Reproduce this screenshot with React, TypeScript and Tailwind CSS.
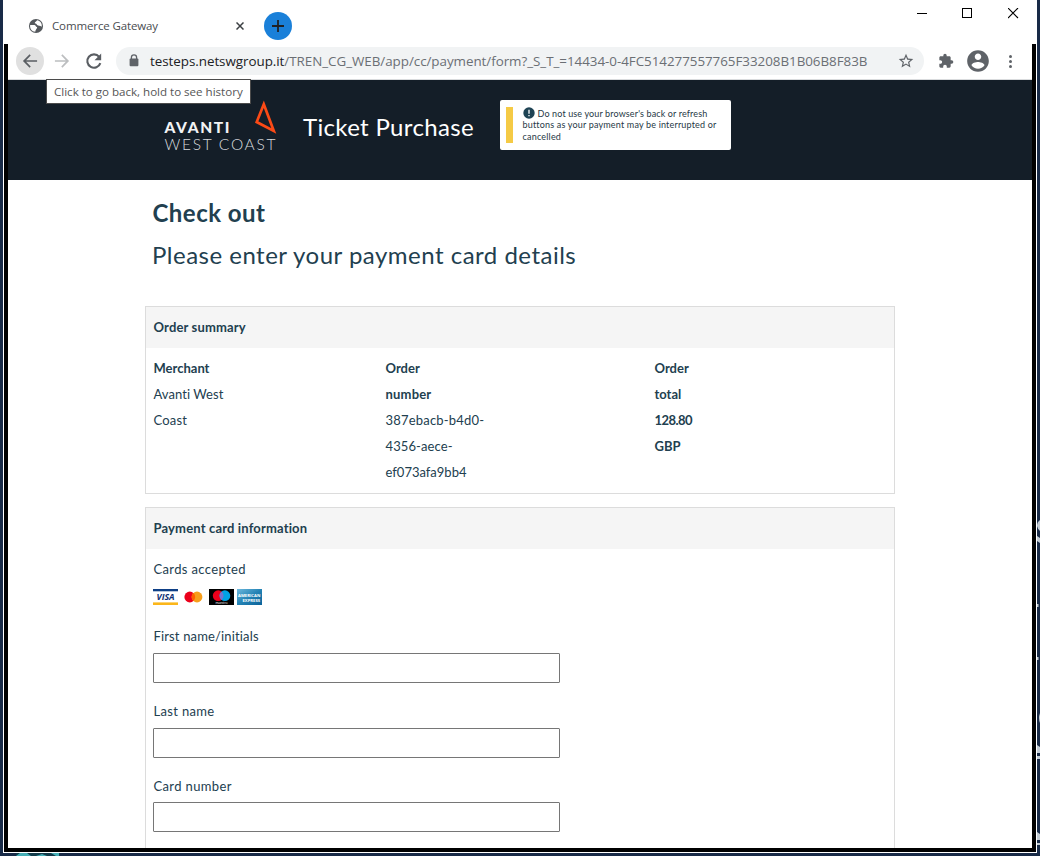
import type { ReactNode } from "react";

function Globe() {
  return (
    <svg width="16" height="16" viewBox="0 0 24 24" className="shrink-0">
      <circle cx="12" cy="12" r="10.6" fill="#55595d" />
      <path d="M3.200 10.600 H9.500 C11.600 10.600 11.600 13.400 13.400 13.600 C14.600 15.600 11.600 16.400 10.900 20.800 C5.800 20.400 2.500 16 3.200 10.600Z" fill="#fff" />
      <path d="M13.600 3.400 C13.200 5.600 9.800 5.400 10.200 8 C11.800 8.600 13 8.600 13.600 10.600 C15.600 12.400 18 11 20.600 13 C21.400 8 18 4 13.600 3.400Z" fill="#fff" />
    </svg>
  );
}

function TitleBar() {
  return (
    <div className="flex h-[44px] shrink-0 items-start">
      <div className="ml-[25px] mt-[18px] flex h-4 items-center">
        <Globe />
        <span className="ml-2 w-[184px] text-[11.5px] leading-4 tracking-[-0.12px] text-[#4a4d51]">Commerce Gateway</span>
        <svg width="8" height="8" viewBox="0 0 8 8">
          <path d="M.5 .5 7.5 7.5M7.5 .5 .5 7.5" stroke="#3c4043" strokeWidth="1.5" />
        </svg>
      </div>
      <div className="ml-[20px] mt-[12px] flex size-[28px] items-center justify-center rounded-full bg-[#1a80d9]">
        <svg width="12" height="12" viewBox="0 0 12 12">
          <path d="M6 0V12M0 6H12" stroke="#202124" strokeWidth="1.8" />
        </svg>
      </div>
      <div className="ml-auto mr-[18px] mt-[8px] flex items-center gap-[35px]">
        <svg width="11" height="11" viewBox="0 0 11 11" shapeRendering="crispEdges">
          <path d="M0 5.5H10" stroke="#000" />
        </svg>
        <svg width="11" height="11" viewBox="0 0 11 11" className="-ml-[1px]" shapeRendering="crispEdges">
          <rect x=".5" y=".5" width="9" height="9" fill="none" stroke="#000" />
        </svg>
        <svg width="11" height="11" viewBox="0 0 11 11">
          <path d="M0 0 10 10M10 0 0 10" stroke="#000" strokeWidth="1.1" />
        </svg>
      </div>
    </div>
  );
}

function Toolbar() {
  return (
    <div className="relative flex h-[36px] items-start border-b border-[#d9dbdd] pl-2 pt-[3px]">
      <div className="flex gap-1 text-[#5a5e63]">
        <div className="flex size-[28px] items-center justify-center rounded-full bg-[#e0e0e0]">
          <svg width="20" height="20" viewBox="0 0 24 24" fill="currentColor">
            <path d="M20.500 11H7.400l5.500-5.500L11.500 4l-8 8 8 8 1.400-1.500L7.400 13H20.500v-2z" />
          </svg>
        </div>
        <div className="flex size-[28px] items-center justify-center text-[#bcbec0]">
          <svg width="20" height="20" viewBox="0 0 24 24" fill="currentColor">
            <path d="M12.500 4 11.100 5.500 16.600 11H3.500v2h13.100l-5.500 5.500L12.500 20l8-8z" />
          </svg>
        </div>
        <div className="flex size-[28px] items-center justify-center">
          <svg width="20" height="20" viewBox="0 0 24 24" fill="none" stroke="currentColor" strokeWidth="2.500">
            <path d="M18.200 7A8 8 0 1 0 19.600 14.500" />
            <path d="M20.600 3V11H12.600L15.600 8L17.700 5.900Z" fill="currentColor" stroke="none" />
          </svg>
        </div>
      </div>
      <div className="ml-2 flex h-[28px] w-[808px] items-center rounded-full bg-[#f1f3f4] pl-[13px] pr-[10px]">
        <svg width="10" height="13" viewBox="0 0 10 13" className="-mt-[2px]">
          <path d="M2.4 5.5V3.4a2.6 2.6 0 0 1 5.2 0V5.5" fill="none" stroke="#5f6368" strokeWidth="1.3" />
          <rect x="0.6" y="4.6" width="8.8" height="7.6" rx="1" fill="#5f6368" />
        </svg>
        <span className="ml-[11px] whitespace-nowrap text-[13.4px] tracking-[-0.04px] text-[#202124]">
          testeps.netswgroup.it
          <span className="text-[#6b6f74]">/TREN_CG_WEB/app/cc/payment/form?_S_T_=14434-0-4FC514277557765F33208B1B06B8F83B</span>
        </span>
        <svg width="16" height="16" viewBox="1 1 22 22" className="ml-auto shrink-0" fill="#5f6368">
          <path d="m22 9.24-7.19-.62L12 2 9.19 8.63 2 9.24l5.46 4.73L5.82 21 12 17.27 18.18 21l-1.63-7.03zM12 15.4l-3.76 2.27 1-4.28-3.32-2.88 4.38-.38L12 6.1l1.71 4.04 4.38.38-3.32 2.88 1 4.28z" />
        </svg>
      </div>
      <div className="ml-2 flex size-[28px] items-center justify-center">
        <svg width="16" height="16" viewBox="0 0 24 24" fill="#5f6368">
          <path d="M20.5 11H19V7c0-1.1-.9-2-2-2h-4V3.500a2.500 2.500 0 0 0-5 0V5H4c-1.100 0-1.990.9-1.990 2v3.800H3.500c1.490 0 2.700 1.210 2.700 2.700s-1.210 2.700-2.700 2.700H2V20c0 1.100.9 2 2 2h3.800v-1.500c0-1.490 1.210-2.700 2.700-2.700s2.700 1.210 2.700 2.700V22H17c1.100 0 2-.9 2-2v-4h1.500a2.500 2.500 0 0 0 0-5z" />
        </svg>
      </div>
      <div className="ml-1 flex size-[28px] items-center justify-center">
        <svg width="26" height="26" viewBox="0 0 24 24" fill="#5f6368">
          <path d="M12 2C6.48 2 2 6.480 2 12s4.480 10 10 10 10-4.480 10-10S17.520 2 12 2zm0 3c1.660 0 3 1.340 3 3s-1.340 3-3 3-3-1.340-3-3 1.340-3 3-3zm0 14.200c-2.500 0-4.710-1.280-6-3.220.03-1.990 4-3.080 6-3.080 1.990 0 5.970 1.090 6 3.080-1.290 1.940-3.500 3.220-6 3.220z" />
        </svg>
      </div>
      <div className="ml-1 flex size-[28px] flex-col items-center justify-center gap-[2px]">
        <i className="size-[3px] rounded-full bg-[#5f6368]" />
        <i className="size-[3px] rounded-full bg-[#5f6368]" />
        <i className="size-[3px] rounded-full bg-[#5f6368]" />
      </div>
      <div className="absolute left-[38px] top-[35px] z-10 flex h-[25px] w-[205px] items-center whitespace-nowrap border border-[#4b4b4b] bg-white pl-[7px] text-[11.6px] tracking-[-0.02px] text-[#565656]">
        Click to go back, hold to see history
      </div>
    </div>
  );
}

function SiteHeader() {
  return (
    <div className="flex h-[100px] items-start bg-[#141e28] pl-[156px] pt-5 font-[Lato,sans-serif]">
      <svg width="114" height="54" viewBox="0 0 114 54">
        <path d="M99.800 4.200 L92.700 22 L109.800 31 Z" fill="none" stroke="#fb4a16" strokeWidth="2.7" strokeLinejoin="miter" />
        <text x="0.500" y="33.300" fontSize="15.500" fontWeight="900" fill="#f2f3f4" textLength="65" style={{ fontFamily: "Lato, sans-serif" }}>AVANTI</text>
        <text x="0.500" y="50" fontSize="15.500" fontWeight="300" fill="#d8dbde" textLength="111" style={{ fontFamily: "Lato, sans-serif" }}>WEST COAST</text>
      </svg>
      <div className="ml-[25px] mt-[12px] w-[197px] whitespace-nowrap text-[24px] leading-[30px] tracking-[0.330px] text-white">Ticket Purchase</div>
      <div className="flex h-[50px] w-[231px] rounded-[2px] bg-white pl-[6px] pt-[7px]">
        <div className="h-[36px] w-[7px] bg-[#f5ca45]" />
        <div className="ml-[9.500px] mt-[1px] whitespace-nowrap text-[9px] leading-[11.400px] text-[#263845]">
          <div className="flex items-center tracking-[0.130px]">
            <svg width="12" height="12" viewBox="0 0 12 12" className="relative -top-px -my-1 mr-[3px]">
              <circle cx="6" cy="6" r="5.700" fill="#1e4354" />
              <path d="M6 2.800V6.800M6 8V9.300" stroke="#fff" strokeWidth="1.300" />
            </svg>
            Do not use your browser's back or refresh
          </div>
          <div className="tracking-[0.180px]">buttons as your payment may be interrupted or</div>
          <div className="tracking-[0.200px]">cancelled</div>
        </div>
      </div>
    </div>
  );
}

function Panel({ title, children, className }: { title: string; children: ReactNode; className: string }) {
  return (
    <section className={"border border-[#dcdcdc] " + className}>
      <h3 className="h-[41px] bg-[#f5f5f5] pl-[7.500px] text-[13px] font-bold leading-[41px] tracking-[0.160px]">{title}</h3>
      {children}
    </section>
  );
}

function Cards() {
  return (
    <div className="mt-[7px] flex h-[16px] gap-[3px]">
      <svg width="25" height="16" viewBox="0 0 25 16">
        <rect width="25" height="2.300" fill="#0e3f86" />
        <rect y="13.400" width="25" height="2.600" fill="#fbb61a" />
        <text x="3.500" y="11.300" fontSize="9" fontWeight="700" fontStyle="italic" fill="#0e2f72" textLength="18" lengthAdjust="spacingAndGlyphs" style={{ fontFamily: "Open Sans, sans-serif" }}>VISA</text>
      </svg>
      <svg width="25" height="16" viewBox="0 0 25 16">
        <circle cx="8.800" cy="8" r="5.400" fill="#eb001b" />
        <circle cx="16" cy="8" r="5.400" fill="#f79e1b" />
        <path d="M12.400 4 A5.400 5.400 0 0 1 12.400 12 A5.400 5.400 0 0 1 12.400 4Z" fill="#ff5f00" />
      </svg>
      <svg width="25" height="16" viewBox="0 0 25 16">
        <rect width="25" height="16" fill="#000" />
        <circle cx="9.200" cy="6.700" r="5.400" fill="#eb001b" />
        <circle cx="15.900" cy="6.700" r="5.400" fill="#00a2e5" />
        <path d="M12.550 2.500 A5.400 5.400 0 0 1 12.550 10.900 A5.400 5.400 0 0 1 12.550 2.500Z" fill="#7375cf" />
        <text x="6.500" y="14.800" fontSize="3.500" fill="#fff" textLength="12" lengthAdjust="spacingAndGlyphs" style={{ fontFamily: "Open Sans, sans-serif" }}>maestro</text>
      </svg>
      <svg width="25" height="16" viewBox="0 0 25 16" className="overflow-visible">
        <defs>
          <linearGradient id="amex" x1="0" y1="0" x2="1" y2="1">
            <stop offset="0" stopColor="#6db8dc" />
            <stop offset="0.500" stopColor="#2483b5" />
            <stop offset="1" stopColor="#0a6299" />
          </linearGradient>
        </defs>
        <rect width="25" height="16" fill="url(#amex)" />
        <text x="1" y="7.900" fontSize="4.200" fontWeight="700" fill="#fff" style={{ fontFamily: "Open Sans, sans-serif" }}>AMERICAN</text>
        <text x="5.500" y="12.800" fontSize="4.200" fontWeight="700" fill="#fff" style={{ fontFamily: "Open Sans, sans-serif" }}>EXPRESS</text>
      </svg>
    </div>
  );
}

function Field({ label, className }: { label: string; className: string }) {
  return (
    <label className="mb-[15.050px] block">
      <span className={"block h-[26px] leading-[26px] " + className}>{label}</span>
      <input className="mt-[3.600px] block h-[30px] w-[407px] rounded-[1px] border border-[#767676] bg-white" />
    </label>
  );
}

function Main() {
  return (
    <main className="mx-[137px] font-[Lato,sans-serif] text-[13px] text-[#22404f]">
      <h1 className="ml-[7.500px] pt-[18px] text-[24px] font-bold leading-[30px] tracking-[0.480px]">Check out</h1>
      <h2 className="ml-[7px] mt-[12px] text-[24px] leading-[30px] tracking-[0.490px]">Please enter your payment card details</h2>
      <Panel title="Order summary" className="mt-[36px] h-[188px]">
        <div className="flex pl-[7.500px] pt-[7px] leading-[26px]">
          <div className="w-[232px]">
            <div className="font-bold">Merchant</div>
            <div className="tracking-[0.060px]">Avanti West</div>
            <div className="tracking-[0.200px]">Coast</div>
          </div>
          <div className="w-[269px]">
            <div className="font-bold">Order</div>
            <div className="font-bold tracking-[0.200px]">number</div>
            <div className="tracking-[0.200px]">387ebacb-b4d0-</div>
            <div className="tracking-[0.100px]">4356-aece-</div>
            <div>ef073afa9bb4</div>
          </div>
          <div className="font-bold">
            <div>Order</div>
            <div>total</div>
            <div className="tracking-[-0.550px]">128.80</div>
            <div>GBP</div>
          </div>
        </div>
      </Panel>
      <Panel title="Payment card information" className="mt-[13px] h-[400px]">
        <div className="pl-[7px] pt-[7px]">
          <div className="pl-[0.500px] leading-[26px] tracking-[0.360px]">Cards accepted</div>
          <Cards />
          <div className="pt-[18.300px]">
            <Field label="First name/initials" className="pl-[0.500px] tracking-[0.150px]" />
            <Field label="Last name" className="pl-[0.500px] tracking-[0.330px]" />
            <Field label="Card number" className="pl-[0.500px] tracking-[0.360px]" />
          </div>
        </div>
      </Panel>
    </main>
  );
}

export default function App() {
  return (
    <div className="relative h-[856px] w-[1040px] overflow-hidden bg-[#182a47] pl-[3px] font-['Open_Sans',sans-serif]">
      <div className="flex h-[853px] w-[1034px] flex-col bg-white">
        <TitleBar />
        <div className="mx-px h-[808px] overflow-hidden border-x-4 border-b-4 border-black">
          <Toolbar />
          <SiteHeader />
          <Main />
        </div>
      </div>
      <svg className="absolute bottom-0 left-[16px]" width="44" height="3" viewBox="0 0 44 3">
        <rect width="44" height="3" fill="#123a49" />
        <path d="M0 3 4 0H11L15 3M20 3 26 1 31 3M35 0H43V3H40Z" fill="#45aeb5" />
      </svg>
      <svg className="absolute right-0 top-[480px]" width="3" height="376" viewBox="0 0 3 376">
        <path d="M3 40Q0 42 0 46Q1 50 3 51ZM0 56 3 58V63L0 61ZM0 124H1.500V127H0ZM0 177H1.500V180H0ZM3 233Q1 238 3 243ZM0 265 3 267V273H0ZM0 276H3V279H0ZM0 352 3 354V360H0ZM0 363H3V365H0Z" fill="#c3ccd5" />
      </svg>
    </div>
  );
}
